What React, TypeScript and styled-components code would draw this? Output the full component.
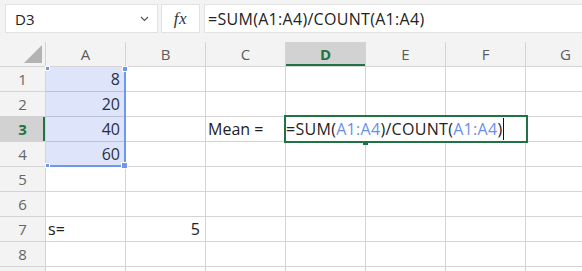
import React from 'react';
import styled, { createGlobalStyle } from 'styled-components';

const GlobalStyle = createGlobalStyle`
  html, body {
    margin: 0;
    padding: 0;
    background: #ffffff;
    overflow: hidden;
  }
  body {
    font-family: 'Open Sans', 'Noto Sans', sans-serif;
  }
`;

const GREEN = '#217346';
const GRID = '#d4d4d4';
const REF_BLUE = '#6f97ef';

const COLUMNS = ['A', 'B', 'C', 'D', 'E', 'F', 'G'];
const ROW_COUNT = 9;
const VISIBLE_LABELS = 8;

type CellValue = { text: string, align?: 'left' | 'right' };

const cells: Record<string, CellValue> = {
  A1: { text: '8', align: 'right' },
  A2: { text: '20', align: 'right' },
  A3: { text: '40', align: 'right' },
  A4: { text: '60', align: 'right' },
  C3: { text: 'Mean =' },
  A7: { text: 's=' },
  B7: { text: '5', align: 'right' },
};

const Page = styled.div`
  width: 582px;
  height: 271px;
  overflow: hidden;
  background: #f3f3f3;
`;

const Toolbar = styled.div`
  display: flex;
  align-items: flex-start;
  height: 42px;
  padding: 4px 0 0 5px;
  box-sizing: border-box;
`;

const NameBox = styled.div`
  display: flex;
  align-items: center;
  justify-content: space-between;
  width: 153px;
  height: 29px;
  box-sizing: border-box;
  background: #fff;
  border: 1px solid #e2e2e2;
  padding: 0 8px 0 9px;
  font-size: 15px;
  color: #222;
`;

const FxBox = styled.div`
  display: flex;
  align-items: center;
  justify-content: center;
  width: 39px;
  height: 29px;
  margin-left: 3px;
  box-sizing: border-box;
  background: #fff;
  border: 1px solid #e2e2e2;
  font-family: 'Liberation Serif', serif;
  font-style: italic;
  font-size: 17px;
  color: #333;
  letter-spacing: 0.5px;
`;

const FormulaBar = styled.div`
  flex: 1;
  display: flex;
  align-items: center;
  height: 29px;
  margin-left: 4px;
  margin-right: -4px;
  box-sizing: border-box;
  background: #fff;
  border: 1px solid #e2e2e2;
  padding-left: 3px;
  font-size: 16px;
  color: #222;
  white-space: nowrap;
`;

const Sheet = styled.div`
  position: relative;
  display: grid;
  grid-template-columns: 46px repeat(7, 80px);
  grid-auto-rows: 25px;
  background: #fff;
`;

const HeaderCell = styled.div<{ $active?: boolean }>`
  display: flex;
  align-items: center;
  justify-content: center;
  box-sizing: border-box;
  background: ${p => (p.$active ? '#d2d2d2' : '#f3f3f3')};
  border-right: 1px solid ${GRID};
  border-bottom: 1px solid ${GRID};
  color: ${p => (p.$active ? GREEN : '#5c5c5c')};
  font-weight: ${p => (p.$active ? 700 : 400)};
  font-size: 15px;
  box-shadow: ${p => (p.$active ? `inset 0 -2px 0 ${GREEN}` : 'none')};
`;

const CornerCell = styled.div`
  position: relative;
  box-sizing: border-box;
  background: #f3f3f3;
  border-right: 1px solid ${GRID};
  border-bottom: 1px solid ${GRID};
`;

const CornerTriangle = styled.div`
  position: absolute;
  right: 3px;
  bottom: 3px;
  width: 18px;
  height: 18px;
  background: #b3b3b3;
  clip-path: polygon(100% 0, 100% 100%, 0 100%);
`;

const RowHeader = styled.div<{ $active?: boolean }>`
  display: flex;
  align-items: center;
  justify-content: center;
  box-sizing: border-box;
  background: ${p => (p.$active ? '#d2d2d2' : '#f3f3f3')};
  border-right: 1px solid ${GRID};
  border-bottom: 1px solid ${GRID};
  color: ${p => (p.$active ? GREEN : '#666')};
  font-weight: ${p => (p.$active ? 700 : 400)};
  font-size: 15px;
  box-shadow: ${p => (p.$active ? `inset -2px 0 0 ${GREEN}` : 'none')};
`;

const Cell = styled.div<{ $align?: 'left' | 'right' }>`
  display: flex;
  align-items: center;
  justify-content: ${p => (p.$align === 'right' ? 'flex-end' : 'flex-start')};
  box-sizing: border-box;
  border-right: 1px solid ${GRID};
  border-bottom: 1px solid ${GRID};
  padding: 0 5px 0 2px;
  font-size: 16px;
  color: #222;
  white-space: nowrap;
  overflow: visible;
`;

const RangeHighlight = styled.div`
  position: absolute;
  left: 46px;
  top: 25px;
  width: 80px;
  height: 100px;
  box-sizing: border-box;
  background: rgba(70, 110, 225, 0.18);
  border-right: 2px solid ${REF_BLUE};
  border-bottom: 2px solid ${REF_BLUE};
  pointer-events: none;
`;

const Handle = styled.div<{ $size: number }>`
  position: absolute;
  width: ${p => p.$size}px;
  height: ${p => p.$size}px;
  background: ${REF_BLUE};
  border: 1px solid #fff;
`;

const Editor = styled.div`
  position: absolute;
  left: 284px;
  top: 73px;
  width: 244px;
  height: 28px;
  box-sizing: border-box;
  border: 2px solid ${GREEN};
  background: #fff;
  display: flex;
  align-items: center;
  font-size: 16px;
  color: #222;
  white-space: nowrap;
`;

const FillHandle = styled.div`
  position: absolute;
  left: 363px;
  top: 100px;
  width: 5px;
  height: 3px;
  background: ${GREEN};
`;

const Formula = styled.span`
  letter-spacing: 0.3px;
`;

const Ref = styled.span`
  color: #6b8fe8;
`;

const Caret = styled.span`
  display: inline-block;
  width: 1px;
  height: 22px;
  margin-left: 1px;
  background: #111;
`;

const Chevron = () => (
  <svg width="9" height="6" viewBox="0 0 9 6" fill="none">
    <path d="M1 1l3.5 3.5L8 1" stroke="#555" strokeWidth="1.2" />
  </svg>
);

const FormulaText: React.FC<{ colored?: boolean }> = ({ colored }) => {
  if (!colored) return <Formula>=SUM(A1:A4)/COUNT(A1:A4)</Formula>;
  return (
    <Formula>
      =SUM(<Ref>A1:A4</Ref>)/COUNT(<Ref>A1:A4</Ref>)
    </Formula>
  );
};

export default function App() {
  const rows = Array.from({ length: ROW_COUNT }, (_, i) => i + 1);

  return (
    <Page>
      <GlobalStyle />
      <Toolbar>
        <NameBox>
          <span>D3</span>
          <Chevron />
        </NameBox>
        <FxBox>fx</FxBox>
        <FormulaBar>
          <FormulaText />
        </FormulaBar>
      </Toolbar>
      <Sheet>
        <CornerCell>
          <CornerTriangle />
        </CornerCell>
        {COLUMNS.map(c => (
          <HeaderCell key={c} $active={c === 'D'}>{c}</HeaderCell>
        ))}
        {rows.map(r => (
          <React.Fragment key={r}>
            <RowHeader $active={r === 3}>{r <= VISIBLE_LABELS ? r : null}</RowHeader>
            {COLUMNS.map(c => {
              const v = cells[c + r];
              return (
                <Cell key={c + r} $align={v?.align}>
                  {v?.text}
                </Cell>
              );
            })}
          </React.Fragment>
        ))}
        <RangeHighlight />
        <Handle $size={3} style={{ left: 45, top: 24 }} />
        <Handle $size={4} style={{ left: 122, top: 24 }} />
        <Handle $size={3} style={{ left: 45, top: 121 }} />
        <Handle $size={5} style={{ left: 121, top: 120 }} />
        <Editor>
          <FormulaText colored />
          <Caret />
        </Editor>
        <FillHandle />
      </Sheet>
    </Page>
  );
}
